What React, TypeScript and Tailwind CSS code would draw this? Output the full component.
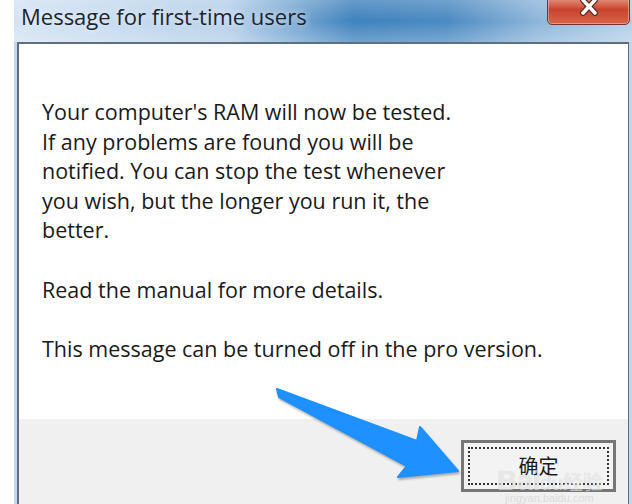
import React from "react";

const CloseButton: React.FC = () => {
  return (
    <div className="absolute right-[2px] top-[-6px] w-[83px] h-[31px] rounded-b-[5px] border border-[#7a3226] bg-gradient-to-b from-[#e9a897] via-[#c8432c] to-[#d9644c] shadow-[inset_0_0_0_1px_rgba(255,255,255,0.35)] flex justify-center pt-[3px]">
      <svg width="20" height="18" viewBox="0 0 20 18">
        <path d="M4 2 L16 15 M16 2 L4 15" stroke="#5a2a20" strokeWidth="6" strokeLinecap="round" />
        <path d="M4 2 L16 15 M16 2 L4 15" stroke="#ffffff" strokeWidth="3.5" strokeLinecap="round" />
      </svg>
    </div>
  );
};

const Arrow: React.FC = () => {
  return (
    <svg
      className="absolute left-0 top-0 pointer-events-none drop-shadow-[1px_2px_1px_rgba(0,0,0,0.3)]"
      width="632"
      height="504"
      viewBox="0 0 632 504"
    >
      <path
        d="M277 389 L417 441 L420 427 L458 471 L398 477 L407 466 L279 397 Z"
        fill="#1e90ff"
        stroke="#1e90ff"
        strokeWidth="2"
        strokeLinejoin="round"
      />
    </svg>
  );
};

const App: React.FC = () => {
  return (
    <div className="relative w-[632px] h-[504px] overflow-hidden bg-white font-['Open_Sans','Noto_Sans',sans-serif]">
      <div className="ml-[14px] h-full flex flex-col bg-[#c3d7ec]">
        {/* title bar */}
        <div className="relative h-[42px] shrink-0 bg-[linear-gradient(90deg,#d3e3f3_0%,#b4cfe9_35%,#3f82bd_55%,#4b8ac2_70%,#8fb6da_85%,#b5cfe8_100%)]">
          <div className="absolute inset-0 bg-gradient-to-b from-white/20 via-transparent to-white/25" />
          <div className="relative pl-[7px] pt-[1px] text-[22px] leading-[30px] text-[#1c2430] [text-shadow:0_0_7px_rgba(255,255,255,0.9)]">
            Message for first-time users
          </div>
          <CloseButton />
        </div>

        {/* client area */}
        <div className="flex-1 flex flex-col ml-[3px] mr-[3px] border-l-2 border-t-2 border-r border-[#5f6f80]">
          <div className="h-[375px] bg-white pl-[23px] pt-[53px] text-[21.5px] leading-[29.6px] text-[#1a1a1a] whitespace-nowrap">
            <p>
              Your computer's RAM will now be tested.
              <br />
              If any problems are found you will be
              <br />
              notified. You can stop the test whenever
              <br />
              you wish, but the longer you run it, the
              <br />
              better.
            </p>
            <p className="mt-[29.6px]">Read the manual for more details.</p>
            <p className="mt-[29.6px]">This message can be turned off in the pro version.</p>
          </div>
          <div className="flex-1 bg-[#f0f0f0] flex justify-end pt-[21px] pr-[12px]">
            <div className="relative w-[155px] h-[52px] border-[3px] border-[#767676] bg-[#f3f3f3] p-[4px]">
              <div className="h-full border-2 border-dotted border-[#333] flex items-center justify-center text-[20px] text-[#1a1a1a] font-['Noto_Sans_CJK_SC',sans-serif]">
                确定
              </div>
              <div className="absolute left-[33px] top-[24px] text-[28px] leading-[28px] font-bold text-white/60 [text-shadow:0_0_1px_rgba(0,0,0,0.2)] font-['Liberation_Sans','Noto_Sans_CJK_SC',sans-serif]">
                Bai<span className="text-[20px] font-normal">du经验</span>
              </div>
            </div>
          </div>
        </div>
      </div>
      <div className="absolute left-[505px] top-[492px] text-[11px] leading-[12px] text-[#dcdcdc] font-['Liberation_Sans',sans-serif]">
        jingyan.baidu.com
      </div>
      <Arrow />
    </div>
  );
};

export default App;
